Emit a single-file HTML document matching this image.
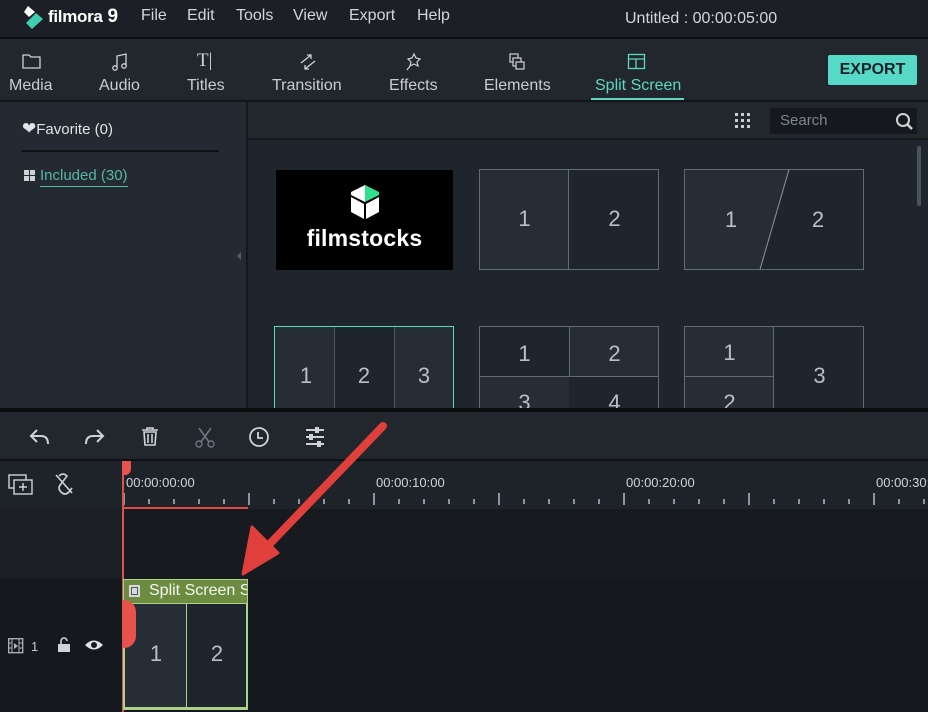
<!DOCTYPE html>
<html><head><meta charset="utf-8"><style>
*{margin:0;padding:0;box-sizing:border-box}
body{width:928px;height:712px;overflow:hidden;background:#1b1f25;font-family:"Liberation Sans",sans-serif;position:relative;color:#d6d9dc}
.a{position:absolute}
.menu span{position:absolute;top:7px;font-size:16px;color:#d3d6d9}
.tab{position:absolute;top:77px;font-size:16px;color:#c9cdd1;text-align:center}
.ic{position:absolute}
.cell{position:absolute;border:1px solid #5f6b76;}
.n{position:absolute;font-size:22px;color:#b7c0c8;text-align:center}
.tk{position:absolute;width:2px;background:#8a96a0}
</style></head><body>
<div class="a" style="left:0;top:0;width:928px;height:37px;background:#1c2026"></div>
<div class="a" style="left:0;top:37px;width:928px;height:2px;background:#0d0f12"></div>
<svg class="a" style="left:22px;top:4px" width="24" height="26" viewBox="0 0 24 26"><path d="M6 2 L13 8 L7 13 L2 8Z" fill="#fff"/><path d="M14 9 L21 15 L10 25 L4 19Z" fill="#3fcfb0"/></svg>
<div class="a" style="left:48px;top:6px;font-size:17px;font-weight:bold;color:#fff;letter-spacing:-0.3px">filmora<span style="font-size:19px"> 9</span></div>
<div class="menu"><span style="left:141px">File</span><span style="left:187px">Edit</span><span style="left:236px">Tools</span><span style="left:293px">View</span><span style="left:349px">Export</span><span style="left:417px">Help</span></div>
<div class="a" style="left:625px;top:10px;font-size:16px;color:#d3d6d9">Untitled : 00:00:05:00</div>
<div class="a" style="left:0;top:39px;width:928px;height:61px;background:#22272e"></div>
<div class="a" style="left:0;top:100px;width:928px;height:2px;background:#111418"></div>
<svg class="ic" style="left:22px;top:53px" width="20" height="17"><path d="M1 2h6l2 2h9v11H1z" fill="none" stroke="#cfd3d6" stroke-width="1.3"/></svg>
<div class="tab" style="left:9px">Media</div>
<svg class="ic" style="left:111px;top:52px" width="18" height="20"><path d="M6 15V4l9-2v11" fill="none" stroke="#cfd3d6" stroke-width="1.3"/><circle cx="4" cy="16" r="2.2" fill="none" stroke="#cfd3d6" stroke-width="1.3"/><circle cx="13" cy="14" r="2.2" fill="none" stroke="#cfd3d6" stroke-width="1.3"/></svg>
<div class="tab" style="left:99px">Audio</div>
<div class="a" style="left:197px;top:50px;font-size:19px;color:#cfd3d6;font-family:'Liberation Serif',serif">T|</div>
<div class="tab" style="left:187px">Titles</div>
<svg class="ic" style="left:298px;top:52px" width="20" height="20"><path d="M3 11 L13 3 M9 3h4v4 M17 9 L7 17 M11 17H7v-4" fill="none" stroke="#cfd3d6" stroke-width="1.3"/></svg>
<div class="tab" style="left:272px">Transition</div>
<svg class="ic" style="left:405px;top:52px" width="18" height="20"><path d="M9 2l2 4 4 1-3 3 1 4-4-2-4 2 1-4-3-3 4-1z M5 14l-3 4" fill="none" stroke="#cfd3d6" stroke-width="1.2"/></svg>
<div class="tab" style="left:389px">Effects</div>
<svg class="ic" style="left:508px;top:52px" width="18" height="20"><rect x="2" y="2" width="8" height="8" fill="none" stroke="#cfd3d6" stroke-width="1.2"/><rect x="5" y="6" width="8" height="8" fill="#22272e" stroke="#cfd3d6" stroke-width="1.2"/><rect x="8" y="10" width="8" height="7" fill="#22272e" stroke="#cfd3d6" stroke-width="1.2"/></svg>
<div class="tab" style="left:484px">Elements</div>
<svg class="ic" style="left:627px;top:53px" width="20" height="18"><rect x="1.5" y="1.5" width="16" height="14" fill="none" stroke="#5fd6c2" stroke-width="1.3"/><path d="M1.5 6h16 M9 6v9.5" stroke="#5fd6c2" stroke-width="1.3"/></svg>
<div class="tab" style="left:595px;color:#5fd6c2">Split Screen</div>
<div class="a" style="left:591px;top:98px;width:93px;height:2px;background:#5fd6c2"></div>
<div class="a" style="left:828px;top:55px;width:89px;height:30px;background:#56d9c6;border-radius:2px;color:#1c2026;font-weight:bold;font-size:16px;text-align:center;line-height:30px">EXPORT</div>
<div class="a" style="left:0;top:102px;width:246px;height:306px;background:#242a31"></div>
<div class="a" style="left:246px;top:102px;width:2px;height:306px;background:#14171b"></div>
<div class="a" style="left:22px;top:119px;font-size:15px;color:#e2e4e6"><span style="font-size:17px">&#10084;</span>Favorite (0)</div>
<div class="a" style="left:22px;top:150px;width:197px;height:2px;background:#0e1013"></div>
<svg class="a" style="left:24px;top:170px" width="12" height="12"><rect x="0" y="0" width="5" height="5" fill="#cfd3d6"/><rect x="6" y="0" width="5" height="5" fill="#cfd3d6"/><rect x="0" y="6" width="5" height="5" fill="#cfd3d6"/><rect x="6" y="6" width="5" height="5" fill="#cfd3d6"/></svg>
<div class="a" style="left:40px;top:167px;font-size:15px;color:#58b6aa;border-bottom:1px solid #58b6aa;padding-bottom:2px">Included (30)</div>
<div class="a" style="left:237px;top:252px;width:0;height:0;border-top:4px solid transparent;border-bottom:4px solid transparent;border-right:4px solid #555e66"></div>
<div class="a" style="left:248px;top:102px;width:680px;height:36px;background:#22272e"></div>
<div class="a" style="left:248px;top:138px;width:680px;height:2px;background:#15181c"></div>
<div class="a" style="left:248px;top:140px;width:680px;height:268px;background:#1f252c"></div>
<svg class="a" style="left:735px;top:113px" width="16" height="16"><g fill="#c9cdd1"><rect x="0" y="0" width="3" height="3"/><rect x="6" y="0" width="3" height="3"/><rect x="12" y="0" width="3" height="3"/><rect x="0" y="6" width="3" height="3"/><rect x="6" y="6" width="3" height="3"/><rect x="12" y="6" width="3" height="3"/><rect x="0" y="12" width="3" height="3"/><rect x="6" y="12" width="3" height="3"/><rect x="12" y="12" width="3" height="3"/></g></svg>
<div class="a" style="left:770px;top:108px;width:147px;height:26px;background:#15181c"></div>
<div class="a" style="left:780px;top:112px;font-size:15px;color:#7e868e">Search</div>
<svg class="a" style="left:895px;top:112px" width="20" height="20"><circle cx="8" cy="8" r="6" fill="none" stroke="#cfd3d6" stroke-width="2"/><path d="M12.5 12.5 L17 17" stroke="#cfd3d6" stroke-width="2.5"/></svg>
<div class="a" style="left:917px;top:146px;width:4px;height:60px;background:#4a535c;border-radius:2px"></div>
<div class="a" style="left:276px;top:170px;width:177px;height:100px;background:#000"></div>
<svg class="a" style="left:348px;top:183px" width="34" height="38" viewBox="0 0 34 38"><path d="M17 2 L3 9 L3 12 L17 19 Z" fill="#fff"/><path d="M17 2 L31 9 L31 12 L17 19Z" fill="#2fe08f"/><path d="M3 14 L16 21 L16 36 L3 29Z" fill="#fff"/><path d="M31 14 L18 21 L18 36 L31 29Z" fill="#fff"/></svg>
<div class="a" style="left:276px;top:225px;width:177px;text-align:center;font-size:23px;font-weight:bold;color:#fff;letter-spacing:0.2px">filmstocks</div>
<div class="cell" style="left:479px;top:169px;width:180px;height:101px;background:#1f252c"></div>
<div class="a" style="left:480px;top:170px;width:89px;height:99px;background:#262d35;border-right:1px solid #5f6b76"></div>
<div class="n" style="left:480px;top:206px;width:89px">1</div><div class="n" style="left:570px;top:206px;width:89px">2</div>
<svg class="a" style="left:684px;top:169px" width="180" height="101"><path d="M0.5 0.5H105L76 100.5H0.5Z" fill="#262d35"/><rect x="0.5" y="0.5" width="179" height="100" fill="none" stroke="#5f6b76"/><path d="M105 0.5 L76 100.5" stroke="#8a96a0"/></svg>
<div class="n" style="left:716px;top:207px;width:30px">1</div><div class="n" style="left:803px;top:207px;width:30px">2</div>
<div class="cell" style="left:274px;top:326px;width:180px;height:84px;border-color:#5fd6c2;border-bottom:none;background:#262d35"></div>
<div class="a" style="left:334px;top:327px;width:61px;height:81px;background:#1f252c;border-left:1px solid #4b5560;border-right:1px solid #4b5560"></div>
<div class="n" style="left:276px;top:363px;width:60px">1</div><div class="n" style="left:334px;top:363px;width:60px">2</div><div class="n" style="left:394px;top:363px;width:60px">3</div>
<div class="cell" style="left:479px;top:326px;width:180px;height:84px;border-bottom:none;background:#1f252c"></div>
<div class="a" style="left:569px;top:327px;width:89px;height:49px;background:#262d35;border-left:1px solid #5f6b76"></div>
<div class="a" style="left:480px;top:376px;width:89px;height:32px;background:#262d35;border-top:1px solid #5f6b76"></div>
<div class="a" style="left:569px;top:376px;width:89px;height:1px;background:#5f6b76"></div>
<div class="n" style="left:480px;top:341px;width:89px">1</div><div class="n" style="left:570px;top:341px;width:89px">2</div><div class="n" style="left:480px;top:390px;width:89px">3</div><div class="n" style="left:570px;top:390px;width:89px">4</div>
<div class="cell" style="left:684px;top:326px;width:180px;height:84px;border-bottom:none;background:#1f252c"></div>
<div class="a" style="left:685px;top:327px;width:89px;height:81px;background:#262d35;border-right:1px solid #5f6b76"></div>
<div class="a" style="left:685px;top:376px;width:89px;height:1px;background:#5f6b76"></div>
<div class="n" style="left:685px;top:340px;width:89px">1</div><div class="n" style="left:685px;top:390px;width:89px">2</div><div class="n" style="left:775px;top:363px;width:89px">3</div>
<div class="a" style="left:0;top:408px;width:928px;height:4px;background:#0a0c0e"></div>
<div class="a" style="left:0;top:412px;width:928px;height:47px;background:#22272e"></div>
<div class="a" style="left:0;top:459px;width:928px;height:2px;background:#0f1114"></div>
<svg class="a" style="left:28px;top:426px" width="24" height="22"><path d="M9 4 L3 10 L9 16 M3 10 H13 Q20 10 20 18" fill="none" stroke="#cfd3d6" stroke-width="2"/></svg>
<svg class="a" style="left:82px;top:426px" width="24" height="22"><path d="M15 4 L21 10 L15 16 M21 10 H11 Q4 10 4 18" fill="none" stroke="#cfd3d6" stroke-width="2"/></svg>
<svg class="a" style="left:140px;top:427px" width="20" height="20"><path d="M2 3h16 M7 3V1h6v2 M4 5h12l-1 13H5z M8 7v9 M12 7v9" fill="none" stroke="#cfd3d6" stroke-width="1.6"/></svg>
<svg class="a" style="left:194px;top:426px" width="22" height="22"><path d="M5 2 L15 16 M17 2 L7 16" stroke="#6e777f" stroke-width="1.6"/><circle cx="5" cy="18" r="3" fill="none" stroke="#6e777f" stroke-width="1.4"/><circle cx="17" cy="18" r="3" fill="none" stroke="#6e777f" stroke-width="1.4"/></svg>
<svg class="a" style="left:248px;top:426px" width="22" height="22"><circle cx="11" cy="11" r="9" fill="none" stroke="#cfd3d6" stroke-width="1.8"/><path d="M10 6v6h5" fill="none" stroke="#cfd3d6" stroke-width="1.8"/></svg>
<svg class="a" style="left:304px;top:426px" width="22" height="22"><path d="M2 4h18 M2 11h18 M2 18h18" stroke="#cfd3d6" stroke-width="2"/><rect x="11" y="1" width="4" height="6" fill="#cfd3d6"/><rect x="5" y="8" width="4" height="6" fill="#cfd3d6"/><rect x="13" y="15" width="4" height="6" fill="#cfd3d6"/></svg>
<div class="a" style="left:0;top:461px;width:928px;height:48px;background:#1e2329"></div>
<div class="a" style="left:0;top:509px;width:928px;height:70px;background:#171a1e"></div>
<div class="a" style="left:0;top:579px;width:928px;height:133px;background:#15181c"></div>
<div class="a" style="left:0;top:509px;width:122px;height:70px;background:#1b1f24"></div>
<div class="a" style="left:0;top:579px;width:122px;height:133px;background:#15181c"></div>
<svg class="a" style="left:8px;top:472px" width="28" height="26"><rect x="1" y="3" width="17" height="13" fill="none" stroke="#cfd3d6" stroke-width="1.4"/><rect x="6" y="8" width="18" height="14" fill="#1e2329" stroke="#cfd3d6" stroke-width="1.4"/><path d="M15 11v8 M11 15h8" stroke="#cfd3d6" stroke-width="1.4"/></svg>
<svg class="a" style="left:53px;top:472px" width="22" height="24"><path d="M6 4 Q10 0 14 4 L8 12 Q4 16 8 20 Q12 24 16 20 L19 16 M3 3 L19 21" fill="none" stroke="#cfd3d6" stroke-width="1.6"/></svg>
<div id="ticks"></div>
<div class="a" style="left:126px;top:475px;font-size:13px;color:#d0d4d8">00:00:00:00</div>
<div class="a" style="left:376px;top:475px;font-size:13px;color:#d0d4d8">00:00:10:00</div>
<div class="a" style="left:626px;top:475px;font-size:13px;color:#d0d4d8">00:00:20:00</div>
<div class="a" style="left:876px;top:475px;font-size:13px;color:#d0d4d8">00:00:30:00</div>
<div class="a" style="left:123px;top:507px;width:125px;height:2px;background:#e04a45"></div>
<div class="a" style="left:122px;top:461px;width:2px;height:251px;background:#d9534f"></div>
<div class="a" style="left:122px;top:461px;width:9px;height:14px;background:#e8524c;border-radius:0 0 6px 0"></div>
<svg class="a" style="left:8px;top:638px" width="16" height="16"><rect x="0.7" y="0.7" width="14" height="14" fill="none" stroke="#b0b6bb" stroke-width="1.3"/><path d="M4 1v14 M11 1v14 M1 5h3 M1 10h3 M11 5h4 M11 10h4" stroke="#b0b6bb"/><path d="M6 5l4 3-4 3z" fill="#b0b6bb"/></svg>
<div class="a" style="left:31px;top:639px;font-size:13px;color:#c5cacf">1</div>
<svg class="a" style="left:57px;top:637px" width="14" height="16"><path d="M4 7V4a3 3 0 0 1 6 0" fill="none" stroke="#cfd3d6" stroke-width="1.6"/><rect x="1" y="7" width="12" height="8" fill="#cfd3d6"/></svg>
<svg class="a" style="left:84px;top:638px" width="20" height="14"><path d="M1 7 Q10 -2 19 7 Q10 16 1 7Z" fill="#e0e3e5"/><circle cx="10" cy="7" r="3" fill="#15181c"/></svg>
<div class="a" style="left:123px;top:579px;width:125px;height:131px;background:#a9d28b"></div>
<div class="a" style="left:124px;top:580px;width:123px;height:23px;background:#6d8c40;overflow:hidden;white-space:nowrap"><div style="position:absolute;left:3px;top:3px;width:15px;height:16px;background:#d7dadc;border:2px solid #6d8c40"><div style="position:absolute;left:2px;top:2px;width:7px;height:8px;border:1px solid #555"></div></div><span style="position:absolute;left:25px;top:2px;font-size:16px;color:#f4f6f2">Split Screen S</span></div>
<div class="a" style="left:125px;top:604px;width:61px;height:103px;background:#262d35"></div>
<div class="a" style="left:187px;top:604px;width:59px;height:103px;background:#1f252c"></div>
<div class="n" style="left:125px;top:641px;width:62px">1</div><div class="n" style="left:187px;top:641px;width:60px">2</div>
<div class="a" style="left:123px;top:600px;width:13px;height:48px;background:#e8524c;border-radius:0 12px 12px 0"></div>
<svg class="a" style="left:0;top:0" width="928" height="712"><path d="M383 426 L262 552" stroke="#e0403b" stroke-width="8" stroke-linecap="round"/><path d="M243 574 L252 527 L278 553 Z" fill="#e0403b" stroke="#e0403b" stroke-width="3" stroke-linejoin="round"/></svg>
<script>
var t=document.getElementById('ticks'),h='';
for(var x=123;x<928;x+=25){var m=((x-123)%125==0);h+='<div class="tk" style="left:'+x+'px;top:'+(m?493:499)+'px;height:'+(m?12:5)+'px"></div>';}
t.innerHTML=h;
</script>
</body></html>
